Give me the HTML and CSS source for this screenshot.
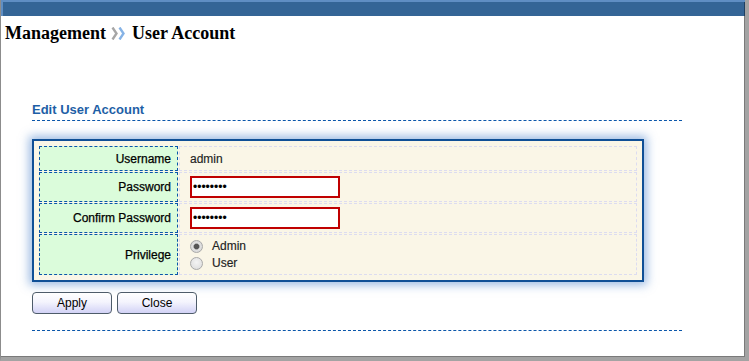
FILE: index.html
```html
<!DOCTYPE html>
<html>
<head>
<meta charset="utf-8">
<link rel="stylesheet" href="styles.css">
</head>
<body>
<div class="frame">
  <div class="topbar"></div>
  <h1 class="title"><span>Management</span><svg class="sep" width="15" height="13" viewBox="0 0 15 13"><path d="M1.5 0.5 L5.5 6.5 L1.5 12.5" fill="none" stroke="#a6a6a6" stroke-width="2.4"/><path d="M8.5 0.5 L12.5 6.5 L8.5 12.5" fill="none" stroke="#86b3e6" stroke-width="2.4"/></svg><span>User Account</span></h1>
  <div class="content">
    <div class="section-title">Edit User Account</div>
    <div class="panel">
      <table class="form">
        <tr class="r1">
          <td class="label">Username</td>
          <td class="value">admin</td>
        </tr>
        <tr class="r2">
          <td class="label">Password</td>
          <td class="value"><input class="field" type="password" value="12345678"></td>
        </tr>
        <tr class="r2">
          <td class="label">Confirm Password</td>
          <td class="value"><input class="field" type="password" value="12345678"></td>
        </tr>
        <tr class="r4">
          <td class="label">Privilege</td>
          <td class="value">
            <label class="opt"><input class="radio" type="radio" name="priv" checked><span>Admin</span></label>
            <label class="opt"><input class="radio" type="radio" name="priv"><span>User</span></label>
          </td>
        </tr>
      </table>
    </div>
    <div class="buttons">
      <button class="btn">Apply</button>
      <button class="btn">Close</button>
    </div>
    <div class="rule"></div>
  </div>
</div>
</body>
</html>
```
FILE: styles.css
```css
html, body {
  margin: 0;
  padding: 0;
  background: #ffffff;
}

.frame {
  width: 749px;
  height: 361px;
  box-sizing: border-box;
  border-left: 1px solid #8c8c8c;
  border-right: 4px solid #a3a3a3;
  border-bottom: 4px solid #a3a3a3;
  box-shadow: inset -1px -1px 0 #7a7a7a;
  overflow: hidden;
}

.topbar {
  height: 16px;
  background: #346596;
  box-shadow: inset 0 2px 0 #5f8ec3, inset 2px 0 0 #5f8ec3, inset -1px 0 0 #1f3f60;
}

.title {
  margin: 5px 0 0 4px;
  font-family: "Liberation Serif", "Times New Roman", serif;
  font-size: 18px;
  font-weight: bold;
  line-height: 24px;
  color: #000;
  display: flex;
  align-items: center;
}

.sep {
  margin: 0 6px 0 5px;
}

.content {
  margin: 57px 0 0 31px;
  width: 650px;
}

.section-title {
  font-family: "Liberation Sans", Arial, sans-serif;
  font-size: 13px;
  font-weight: bold;
  line-height: 16px;
  color: #1e5fa6;
  padding-bottom: 2px;
  border-bottom: 1px dashed #0a56aa;
}

.panel {
  margin-top: 18px;
  width: 612px;
  box-sizing: border-box;
  border: 2px solid #0f4f96;
  background: #faf6e7;
  padding: 4px;
  box-shadow: 0 0 9px 3px rgba(60, 120, 200, 0.5);
}

.form {
  width: 600px;
  border-collapse: separate;
  border-spacing: 1px;
  font-family: "Liberation Sans", Arial, sans-serif;
  font-size: 12px;
}

.form td {
  padding: 0;
  vertical-align: middle;
}

.label {
  width: 126px;
  padding: 0 6px 0 5px !important;
  text-align: right;
  background: #dbfcdb;
  border: 1px dashed #0a56aa;
  color: #000;
  -webkit-text-stroke: 0.25px #000;
}

.value {
  padding-left: 10px !important;
  border: 1px dashed #dcdcf0;
  color: #222;
  -webkit-text-stroke: 0.15px #222;
}

.r1 { height: 25px; }
.r2 { height: 30px; }
.r4 { height: 41px; }

.field {
  display: block;
  margin: 0;
  width: 150px;
  height: 22px;
  box-sizing: border-box;
  border: 2px solid #c00000;
  padding: 0 1px;
  font-family: "Liberation Sans", Arial, sans-serif;
  font-size: 12px;
  background: #fff;
  outline: none;
}

.opt {
  display: flex;
  align-items: center;
  height: 17px;
  color: #222;
}

.radio {
  -webkit-appearance: none;
  appearance: none;
  width: 13px;
  height: 13px;
  margin: 0 9px 0 0;
  border-radius: 50%;
  border: 1px solid #a9a9a9;
  background: radial-gradient(circle at 50% 40%, #f4f4f4 0%, #dadada 100%);
  box-sizing: border-box;
}

.radio:checked {
  background: radial-gradient(circle, #555 0 2.3px, #9a9a9a 2.8px, #e0e0e0 3.6px, #d4d4d4 100%);
}

.buttons {
  margin-top: 10px;
  display: flex;
  gap: 5px;
}

.btn {
  width: 80px;
  height: 22px;
  box-sizing: border-box;
  border: 1px solid #4e5c6a;
  border-radius: 4px;
  background: linear-gradient(to bottom, #ffffff 0%, #f4f4fd 45%, #d2d2f6 100%);
  font-family: "Liberation Sans", Arial, sans-serif;
  font-size: 12px;
  color: #000;
  padding: 0;
}

.rule {
  margin-top: 16px;
  border-top: 1px dashed #0a56aa;
}
```
